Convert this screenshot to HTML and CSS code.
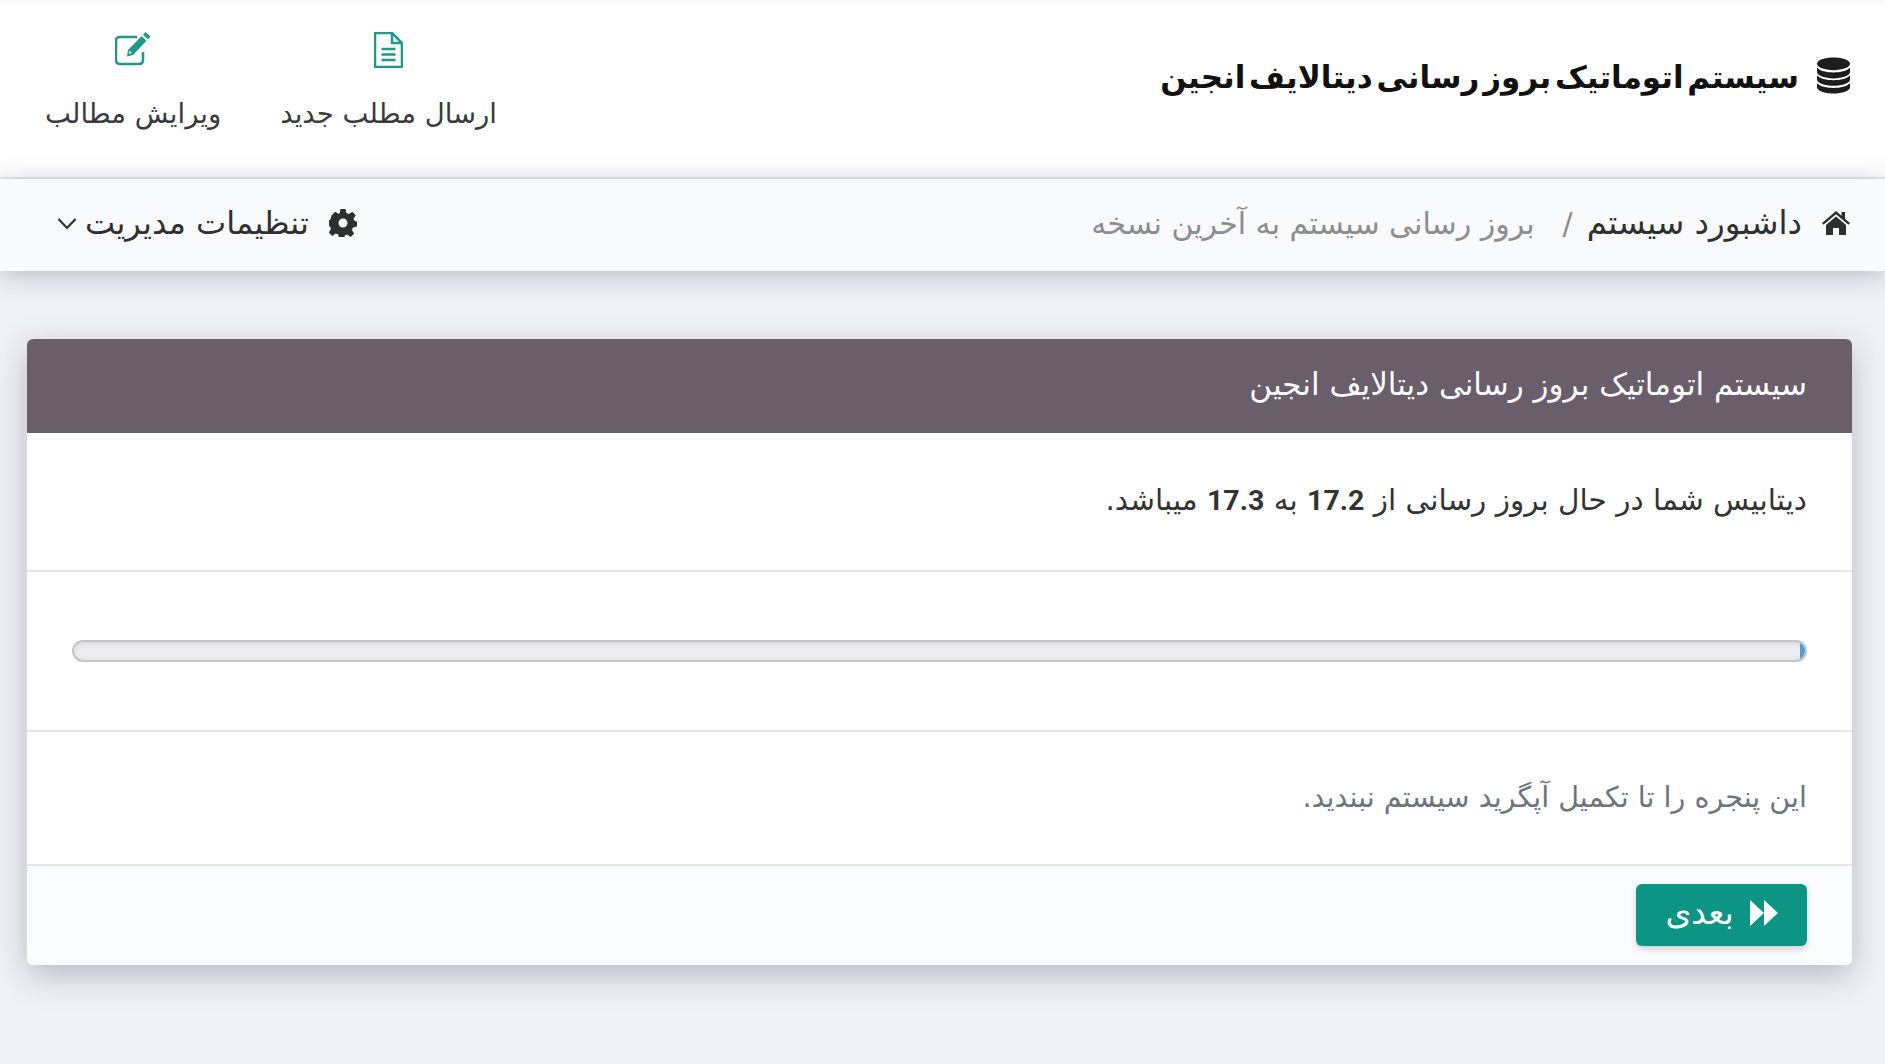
FILE: index.html
```html
<!DOCTYPE html>
<html lang="fa" dir="rtl">

<head>
    <meta charset="UTF-8">
    <title>سیستم اتوماتیک بروز رسانی دیتالایف انجین</title>
    <link rel="stylesheet" href="styles.css">
</head>

<body>
    <header class="top-bar">
        <div class="brand">
            <svg class="brand-icon" viewBox="0 0 34 37" aria-hidden="true">
                <path d="M17 0C8 0 0 2.500 0 6.500S8 13 17 13s17-2.500 17-6.500S26 0 17 0z" />
                <path d="M0 10.500V15c0 3.800 8 6.500 17 6.500S34 18.800 34 15v-4.500c-3 3.300-10 4.800-17 4.800S3 13.800 0 10.500z" />
                <path d="M0 18.500V22.500C0 26.300 8 29 17 29s17-2.700 17-6.500v-4c-3 3.300-10 4.800-17 4.800S3 21.800 0 18.500z" />
                <path d="M0 26.500v4C0 34.300 8 37 17 37s17-2.700 17-6.500v-4c-3 3.300-10 4.800-17 4.800S3 29.800 0 26.500z" />
            </svg>
            <h1>سیستم اتوماتیک بروز رسانی دیتالایف انجین</h1>
        </div>
        <nav class="quick-links">
            <a class="quick-link" href="#">
                <svg class="quick-icon" viewBox="0 0 29 36" aria-hidden="true">
                    <path class="line" d="M1 1h17l10 10v24H1z" />
                    <path class="line" d="M18 1v10h10" />
                    <path class="line" d="M7.500 17h14M7.500 22.500h14M7.500 28h14" />
                </svg>
                <span>ارسال مطلب جدید</span>
            </a>
            <a class="quick-link" href="#">
                <svg class="quick-icon" viewBox="0 0 36 36" aria-hidden="true">
                    <path class="line" d="M28 20v8c0 2.500-1.500 4-4 4H5c-2.500 0-4-1.500-4-4V9c0-2.500 1.500-4 4-4h17" />
                    <path class="solid" d="M30.500 0l5 4.500-2.500 2.700-5-4.500zM26.500 4.200l5 4.500-13.500 14.300-6 1.500 1-6.500zM14.500 18.500l-.6 3.300 3-.8z" />
                </svg>
                <span>ویرایش مطالب</span>
            </a>
        </nav>
    </header>

    <div class="sub-bar">
        <div class="breadcrumb">
            <svg class="home-icon" viewBox="0 0 28 24" aria-hidden="true">
                <path d="M14 0L0 12l1.500 1.800L14 3.300l12.500 10.500L28 12l-5-4.300V1h-3.500v3.700z" />
                <path d="M14 5.500L4 14v10h7v-7h6v7h7V14z" />
            </svg>
            <a class="crumb-link" href="#">داشبورد سیستم</a>
            <span class="crumb-sep">/</span>
            <span class="crumb-current">بروز رسانی سیستم به آخرین نسخه</span>
        </div>
        <div class="admin-menu">
            <svg class="gear-icon" viewBox="0 0 28 28" aria-hidden="true">
                <path fill-rule="evenodd" d="M11.500 0h5l.8 4 2.600 1.100 3.400-2.300 3.500 3.500-2.300 3.400L25.600 12l2.400.600v5l-4 .8-1.100 2.500 2.300 3.500-3.500 3.500-3.400-2.300-2.500 1-.8 2.400h-5l-.8-3.400-2.500-1-3.500 2.300-3.500-3.500 2.300-3.500-1-2.500-4-.8v-5l4-.6 1-2.600L2.700 6.300l3.500-3.500 3.500 2.300 1-1.100zM14 9.500a4.500 4.500 0 1 0 0 9 4.500 4.500 0 0 0 0-9z" />
            </svg>
            <span class="admin-label">تنظیمات مدیریت</span>
            <svg class="chevron" viewBox="0 0 20 13" aria-hidden="true">
                <path d="M1.500 2l8.500 9 8.500-9" />
            </svg>
        </div>
    </div>

    <main class="card">
        <div class="card-header">سیستم اتوماتیک بروز رسانی دیتالایف انجین</div>
        <div class="card-row status-row">دیتابیس شما در حال بروز رسانی از <b>17.2</b> به <b>17.3</b> میباشد.</div>
        <div class="card-row progress-row">
            <div class="progress">
                <div class="progress-bar" style="width: 0.3%"></div>
            </div>
        </div>
        <div class="card-row note-row">این پنجره را تا تکمیل آپگرید سیستم نبندید.</div>
        <div class="card-footer">
            <button class="next-btn" type="button">
                <svg class="next-icon" viewBox="0 0 30 28" aria-hidden="true">
                    <path d="M0 0l15 14L0 28zM15 0l15 14-15 14z" />
                </svg>
                <span>بعدی</span>
            </button>
        </div>
    </main>
</body>

</html>
```

FILE: styles.css
```css
* {
    box-sizing: border-box;
    margin: 0;
    padding: 0;
}

body {
    font-family: "DejaVu Sans", "Noto Sans", sans-serif;
    background-color: #f0f2f7;
    min-height: 1064px;
    color: #333;
    overflow: hidden;
}

a {
    color: inherit;
    text-decoration: none;
}

.top-bar {
    display: flex;
    justify-content: space-between;
    height: 179px;
    padding: 0 35px 0 45px;
    background-color: #fff;
    border-bottom: 2px solid #e6e8ec;
    box-shadow: inset 0 5px 5px -3px #f3f3f3;
}

.brand {
    display: flex;
    align-items: center;
    gap: 18px;
    padding-bottom: 24px;
}

.brand-icon {
    width: 33px;
    height: 37px;
    margin-bottom: 3px;
    fill: #1d1d1f;
}

.brand h1 {
    font-size: 31px;
    font-weight: 700;
    word-spacing: -7px;
    color: #111;
}

.quick-links {
    display: flex;
    gap: 59px;
}

.quick-link {
    display: flex;
    flex-direction: column;
    align-items: center;
    padding-top: 32px;
    font-size: 27.500px;
    color: #3a3a3d;
}

.quick-icon {
    width: auto;
    height: 36px;
    margin-bottom: 29px;
}

.quick-icon .line {
    fill: none;
    stroke: #1f9888;
    stroke-width: 2.500;
}

.quick-icon .solid {
    fill: #1f9888;
}

.sub-bar {
    display: flex;
    justify-content: space-between;
    align-items: center;
    height: 92px;
    padding: 0 35px 4px 57px;
    background-color: #f9fafc;
    box-shadow: 0 4px 24px rgba(80, 85, 105, 0.36);
    font-size: 30px;
}

.breadcrumb {
    display: flex;
    align-items: center;
    color: #2f2f32;
}

.home-icon {
    width: 28px;
    height: 24px;
    margin-left: 20px;
    fill: #2f2f32;
}

.crumb-link {
    font-size: 32.500px;
}

.crumb-sep {
    margin-right: 14px;
    margin-left: 28px;
}

.crumb-sep,
.crumb-current {
    color: #8c8c8f;
}

.admin-menu {
    display: flex;
    align-items: center;
    gap: 20px;
    color: #2f2f32;
}

.admin-label {
    font-size: 32px;
}

.gear-icon {
    width: 28px;
    height: 28px;
    fill: #2f2f32;
}

.chevron {
    width: 20px;
    height: 13px;
    margin-right: -12px;
    fill: none;
    stroke: #2f2f32;
    stroke-width: 2.200;
}

.card {
    margin: 68px 33px 0 27px;
    background-color: #fff;
    border-radius: 6px;
    box-shadow: 0 10px 32px rgba(70, 75, 95, 0.34);
    overflow: hidden;
}

.card-header {
    display: flex;
    align-items: center;
    height: 94px;
    padding: 0 45px 4px;
    background-color: #695e6a;
    color: #fff;
    font-size: 31px;
}

.card-row {
    padding: 0 45px;
    border-bottom: 2px solid #e4e5e8;
}

.status-row {
    height: 139px;
    line-height: 135px;
    font-size: 29.500px;
    color: #333;
}

.status-row b {
    font-family: "Roboto", sans-serif;
    font-weight: 700;
    font-size: 28.500px;
}

.progress-row {
    display: flex;
    align-items: center;
    height: 160px;
}

.progress {
    display: flex;
    width: 100%;
    height: 22px;
    background-color: #ececee;
    border: 2px solid #c4c4c6;
    border-radius: 11px;
    overflow: hidden;
    box-shadow: inset 0 1px 4px rgba(0, 0, 0, 0.1);
}

.progress-bar {
    background-color: #4f9fd8;
}

.note-row {
    display: flex;
    align-items: center;
    height: 134px;
    padding-bottom: 2px;
    font-size: 28.600px;
    color: #6c757d;
}

.card-footer {
    display: flex;
    align-items: flex-start;
    height: 99px;
    padding: 18px 45px 0;
    background-color: #fbfcfd;
}

.next-btn {
    display: flex;
    align-items: center;
    justify-content: center;
    gap: 16px;
    width: 171px;
    height: 62px;
    padding-bottom: 5px;
    font-family: inherit;
    font-size: 33px;
    color: #fff;
    background-color: #0c9485;
    border: 0;
    border-radius: 6px;
    box-shadow: 0 3px 6px rgba(0, 0, 0, 0.18);
}

.next-icon {
    width: 28px;
    height: 28px;
    fill: #fff;
}
```
